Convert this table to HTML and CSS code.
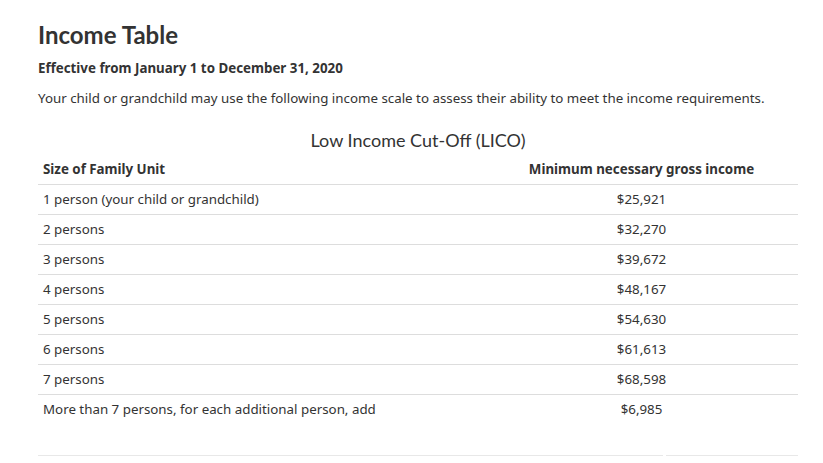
FILE: index.html
```html
<!DOCTYPE html>
<html lang="en">
<head>
<meta charset="utf-8">
<title>Income Table</title>
<link rel="stylesheet" href="styles.css">
</head>
<body>
<main class="page">
  <h1 class="title">Income Table</h1>
  <p class="effective">Effective from January 1 to December 31, 2020</p>
  <p class="intro">Your child or grandchild may use the following income scale to assess their ability to meet the income requirements.</p>
  <table class="lico">
    <caption>Low Income Cut-Off (LICO)</caption>
    <thead>
      <tr><th class="c1">Size of Family Unit</th><th class="c2">Minimum necessary gross income</th></tr>
    </thead>
    <tbody>
      <tr><td>1 person (your child or grandchild)</td><td class="num">$25,921</td></tr>
      <tr><td>2 persons</td><td class="num">$32,270</td></tr>
      <tr><td>3 persons</td><td class="num">$39,672</td></tr>
      <tr><td>4 persons</td><td class="num">$48,167</td></tr>
      <tr><td>5 persons</td><td class="num">$54,630</td></tr>
      <tr><td>6 persons</td><td class="num">$61,613</td></tr>
      <tr><td>7 persons</td><td class="num">$68,598</td></tr>
      <tr class="last"><td>More than 7 persons, for each additional person, add</td><td class="num">$6,985</td></tr>
    </tbody>
  </table>
  <div class="footer-rule">
    <div class="rule-a"></div>
    <div class="rule-b"></div>
  </div>
</main>
</body>
</html>
```

FILE: styles.css
```css
html, body {
  margin: 0;
  padding: 0;
  background: #fff;
}
body {
  font-family: "Noto Sans", "Open Sans", sans-serif;
  color: #333;
  font-size: 13.33px;
}
.page {
  width: 760px;
  padding: 18px 0 0 38px;
}
.title {
  font-family: Lato, "Noto Sans", sans-serif;
  font-weight: 700;
  font-size: 24px;
  line-height: 34px;
  margin: 0 0 6px 0;
  color: #333;
}
.effective {
  font-weight: 700;
  font-size: 13.33px;
  line-height: 20px;
  margin: 0 0 10px 0;
}
.intro {
  font-size: 13.33px;
  line-height: 20px;
  margin: 0 0 19px 0;
}
.lico {
  width: 760px;
  border-collapse: collapse;
}
.lico caption {
  font-family: Lato, "Noto Sans", sans-serif;
  font-size: 18px;
  line-height: 26px;
  text-align: center;
  color: #333;
  padding: 0 0 2px 0;
}
.lico th, .lico td {
  padding: 5px 5px;
  line-height: 19px;
  font-size: 13.33px;
  border-bottom: 1px solid #ddd;
}
.lico th {
  font-weight: 700;
  text-align: left;
}
.lico .c1 {
  width: 437px;
}
.lico th.c2, .lico td.num {
  text-align: center;
}
.lico tr.last td {
  border-bottom: none;
  padding-bottom: 36px;
  vertical-align: top;
}
.footer-rule {
  display: flex;
  gap: 3px;
}
.rule-a {
  flex: 0 0 625px;
  border-top: 1px solid #e8e8e8;
}
.rule-b {
  flex: 1;
  border-top: 1px solid #e8e8e8;
}
```
